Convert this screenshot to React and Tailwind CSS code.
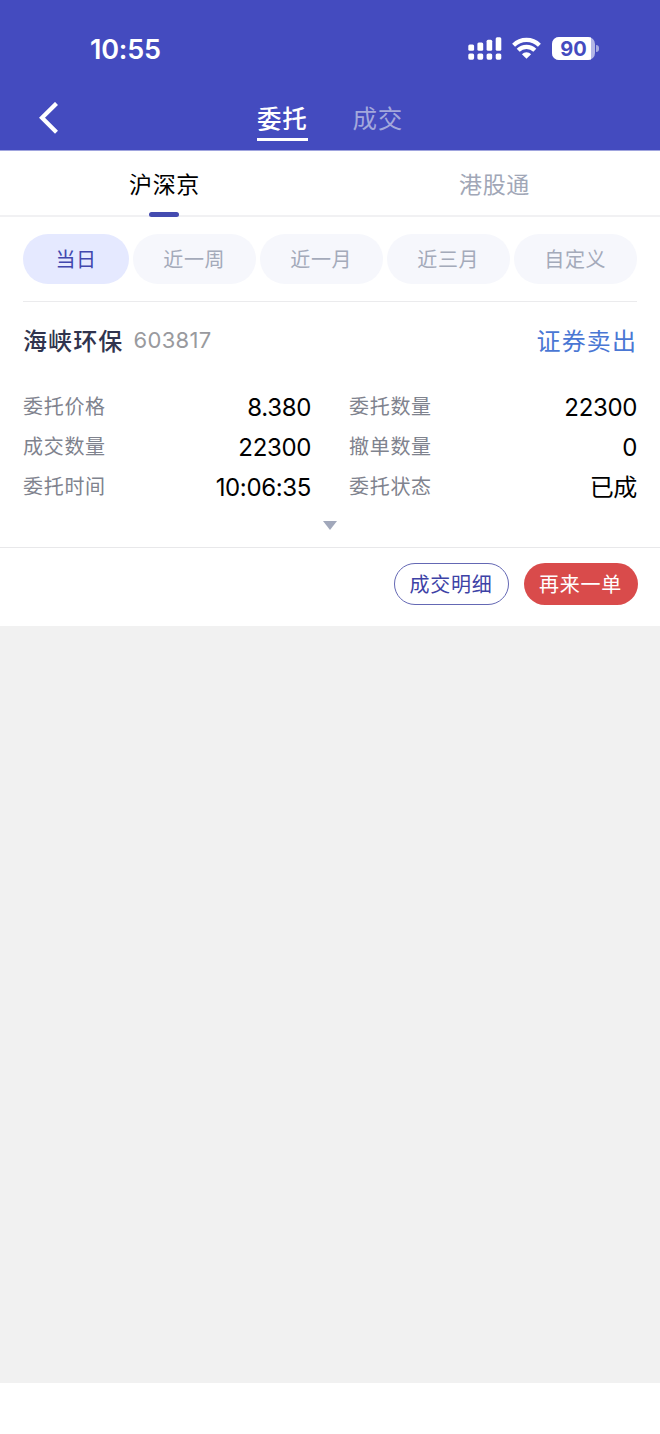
const ranges = ["近一周", "近一月", "近三月", "自定义"]

const details = [
    { label: "委托价格", value: "8.380" },
    { label: "委托数量", value: "22300" },
    { label: "成交数量", value: "22300" },
    { label: "撤单数量", value: "0" },
    { label: "委托时间", value: "10:06:35" },
    { label: "委托状态", value: "已成" },
]

function SignalIcon() {

    return (

        <svg className="w-[34px] h-6" viewBox="0 0 34 24" fill="white">
            <rect x="0.3" y="7.4" width="5.8" height="6.3" rx="1.5" />
            <rect x="9.4" y="5.4" width="5.8" height="8.3" rx="1.5" />
            <rect x="18.6" y="2.7" width="5.6" height="11" rx="1.5" />
            <rect x="27.7" y="0.2" width="5.6" height="13.5" rx="1.5" />
            <rect x="0.3" y="16.5" width="5.8" height="6.2" rx="1.6" />
            <rect x="9.4" y="16.5" width="5.8" height="6.2" rx="1.6" />
            <rect x="18.6" y="16.5" width="5.6" height="6.2" rx="1.6" />
            <rect x="27.7" y="16.5" width="5.6" height="6.2" rx="1.6" />
        </svg>

    )

}

function WifiIcon() {

    return (

        <svg className="w-[29px] h-[22px]" viewBox="0 0 29 22" fill="none" stroke="white" strokeWidth="4.2">
            <path d="M1.6 8.2 A18.4 18.4 0 0 1 27.4 8.2" />
            <path d="M6.2 13.3 A11.6 11.6 0 0 1 22.8 13.3" />
            <path d="M14.5 21.8 L9.9 17.2 A6.5 6.5 0 0 1 19.1 17.2 Z" fill="white" stroke="none" />
        </svg>

    )

}

function Battery() {

    return (

        <div className="flex items-center gap-px">

            <div className="w-[43px] h-[23px] rounded-[7px] overflow-hidden bg-[#b3b6e6] flex">
                <div className="w-[39px] h-full bg-white text-[#444bbf] text-[20px] leading-6 font-bold text-center pl-[4px]">
                    90
                </div>
            </div>

            <div className="w-[3px] h-[7px] rounded-r-full bg-[#a6aae0]" />

        </div>

    )

}

function Header() {

    return (

        <header className="h-[151px] bg-[#444bbf] border-b border-[#a0a4de] text-white">

            <div className="h-[86px] pt-[37px] pl-[90px] pr-[61px] flex justify-between items-start">

                <span className="text-[27px] leading-[26px] font-semibold tracking-[-0.2px]">
                    10:55
                </span>

                <div className="flex items-start">
                    <SignalIcon />
                    <div className="ml-[10px] mr-[11px]">
                        <WifiIcon />
                    </div>
                    <Battery />
                </div>

            </div>

            <nav className="h-16 grid grid-cols-[1fr_auto_1fr] items-center">

                <button className="pl-[38px]">
                    <svg className="w-[22px] h-8" viewBox="0 0 22 32" fill="none" stroke="white" strokeWidth="4.2">
                        <path d="M18.5 1.4 L4 15.8 L18.5 30.2" />
                    </svg>
                </button>

                <div className="flex gap-[45px] text-[24.5px] tracking-[0.7px]">
                    <button className="h-[39px] pt-1 leading-10 font-medium border-b-3 border-white box-content">
                        委托
                    </button>
                    <button className="h-[39px] pt-1 leading-10 text-[#a3a8dc] box-content">
                        成交
                    </button>
                </div>

            </nav>

        </header>

    )

}

function MarketTabs() {

    return (

        <div className="h-[66px] grid grid-cols-2 border-b-2 border-[#f1f1f3] text-[23px] tracking-[0.6px] text-center">

            <div className="relative leading-[68px] -ml-px text-black">
                沪深京
                <span className="absolute left-[150px] top-[61px] w-[30px] h-[5px] rounded-full bg-[#444bb0]" />
            </div>

            <div className="leading-[68px] -ml-px text-[#a1a7b7]">
                港股通
            </div>

        </div>

    )

}

function App() {

    return (

        <div className="w-[660px] h-[1434px] flex flex-col bg-white font-['Inter','Noto_Sans_CJK_SC',sans-serif]">

            <Header />

            <MarketTabs />

            <section className="h-[330px] flex flex-col">

                <div className="mx-[23px] h-[85px] pt-[17px] flex gap-[3.5px] border-b border-[#ebebed] text-[20px] leading-[52px] tracking-[0.6px] text-center">

                    <button className="w-[106px] h-[50px] rounded-full bg-[#e5e9ff] text-[#4147ae]">
                        当日
                    </button>

                    {ranges.map(range => (

                        <button
                            key={range}
                            className="flex-1 h-[50px] rounded-full bg-[#f6f7fc] text-[#a4aaba]"
                        >
                            {range}
                        </button>

                    ))}

                </div>

                <div className="mx-[23px] h-[85px] pt-[18px] flex">

                    <h2 className="text-[24px] leading-[43px] font-medium tracking-[1.1px] text-[#30344e]">
                        海峡环保
                    </h2>

                    <span className="ml-[10px] text-[22px] leading-10 tracking-[0.35px] text-[#999a9e]">
                        603817
                    </span>

                    <span className="ml-auto text-[24px] leading-[43px] tracking-[1.1px] text-[#4a77d4]">
                        证券卖出
                    </span>

                </div>

                <div className="mx-[23px] grid grid-cols-2 gap-x-[38px]">

                    {details.map(item => (

                        <div key={item.label} className="h-10 flex justify-between leading-10">
                            <span className="text-[20px] tracking-[0.7px] text-[#7f838e]">
                                {item.label}
                            </span>
                            <span className="text-[24px] pt-px tracking-[-0.35px] text-black">
                                {item.value}
                            </span>
                        </div>

                    ))}

                </div>

                <svg className="mt-[14px] mx-auto w-[14px] h-[9px]" viewBox="0 0 14 9" fill="#a1a8bb">
                    <path d="M0 0 H14 L7 9 Z" />
                </svg>

            </section>

            <div className="h-[79px] pt-[15px] pr-[22.5px] flex justify-end gap-[15px] border-t border-[#e8e8ea] text-[20px] tracking-[0.7px]">

                <button className="w-[115px] h-[42px] leading-[42px] rounded-full border border-[#6468b4] text-[#3d42a6]">
                    成交明细
                </button>

                <button className="w-[114px] h-[42px] leading-[44px] rounded-full bg-[#d94b4b] text-white">
                    再来一单
                </button>

            </div>

            <main className="h-[757px] bg-[#f1f1f1]" />

        </div>

    )

}

export default App
